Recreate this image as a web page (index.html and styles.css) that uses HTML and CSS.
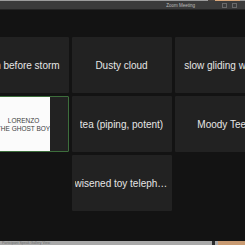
FILE: index.html
```html
<!DOCTYPE html>
<html lang="en">

<head>
    <meta charset="UTF-8">
    <meta name="viewport" content="width=device-width, initial-scale=1.0">
    <title>Zoom Meeting</title>
    <link rel="stylesheet" href="styles.css">
</head>

<body>
    <div class="screen">
        <div class="topline">
            <span class="topline-dark"></span>
            <span class="topline-peach"></span>
        </div>

        <div class="titlebar">
            <span class="title">Zoom Meeting</span>
            <span class="title-ctrls">
                <i></i><i></i>
            </span>
        </div>

        <div class="stage">
            <div class="grid">
                <div class="tile"><span class="name">Calm before storm</span></div>
                <div class="tile"><span class="name">Dusty cloud</span></div>
                <div class="tile"><span class="name">slow gliding whale</span></div>

                <div class="tile tile-active">
                    <div class="video">
                        <span>LORENZO</span>
                        <span>THE GHOST BOY</span>
                    </div>
                </div>
                <div class="tile"><span class="name">tea (piping, potent)</span></div>
                <div class="tile"><span class="name">Moody Teen</span></div>

                <div class="tile tile-mid"><span class="name">wisened toy telephone</span></div>
            </div>
        </div>

        <div class="taskbar">
            <span class="taskbar-text">Participant Speak Gallery View</span>
            <span class="taskbar-dark"></span>
            <span class="taskbar-peach"></span>
        </div>
    </div>
</body>

</html>
```

FILE: styles.css
```css
html,
body {
    margin: 0;
    padding: 0;
    background: #131313;
}

/* whole window */
.screen {
    width: 245px;
    height: 245px;
    overflow: hidden;
    display: flex;
    flex-direction: column;
    font-family: "Liberation Sans", Arial, sans-serif;
}

/* thin desktop strip above the window */
.topline {
    height: 1px;
    background: #9c9c9c;
    display: flex;
    justify-content: flex-end;
}

.topline-dark {
    width: 7px;
    background: #4a4440;
}

.topline-peach {
    width: 25px;
    margin-right: 5px;
    background: #d9a87c;
}

/* title bar */
.titlebar {
    height: 8px;
    background: #3b3b3b;
    border-bottom: 1px solid #242424;
    display: flex;
    align-items: center;
    justify-content: flex-end;
    padding-right: 8px;
}

.title {
    font-size: 4.5px;
    color: #bdbdbd;
    margin-right: 27px;
}

.title-ctrls {
    display: flex;
    gap: 5px;
}

.title-ctrls i {
    width: 3px;
    height: 3px;
    border: 1px solid #6a6a6a;
}

/* meeting area */
.stage {
    flex: 1;
    background: #131313;
    display: flex;
    justify-content: center;
    padding-top: 27px;
}

.grid {
    flex: none;
    display: grid;
    grid-template-columns: repeat(3, 100px);
    grid-auto-rows: 56px;
    gap: 3px;
    align-content: start;
    margin-left: -2px;
}

.tile {
    background: #222222;
    border-radius: 1px;
    display: flex;
    align-items: center;
    justify-content: center;
    padding: 0 3px;
    min-width: 0;
}

.name {
    font-size: 10px;
    color: #e6e6e6;
    white-space: nowrap;
    overflow: hidden;
    text-overflow: ellipsis;
}

.tile-mid {
    grid-column: 2;
}

/* active speaker */
.tile-active {
    border: 1px solid #3d6e3c;
    padding: 0;
    justify-content: flex-start;
    align-items: stretch;
}

.video {
    width: 80px;
    background: #fbfbfb;
    padding-left: 28px;
    box-sizing: border-box;
    display: flex;
    flex-direction: column;
    align-items: center;
    justify-content: center;
    gap: 1px;
    font-size: 6.5px;
    color: #3c3c3c;
    white-space: nowrap;
}

/* desktop taskbar */
.taskbar {
    height: 4px;
    background: #a9a9a9;
    display: flex;
    align-items: center;
}

.taskbar-text {
    font-size: 3.5px;
    color: #6f6f6f;
    padding-left: 2px;
    flex: 1;
}

.taskbar-dark {
    width: 3px;
    height: 4px;
    background: #2a2a2a;
    margin-right: 3px;
}

.taskbar-peach {
    width: 27px;
    height: 4px;
    background: #c99b72;
}
```
